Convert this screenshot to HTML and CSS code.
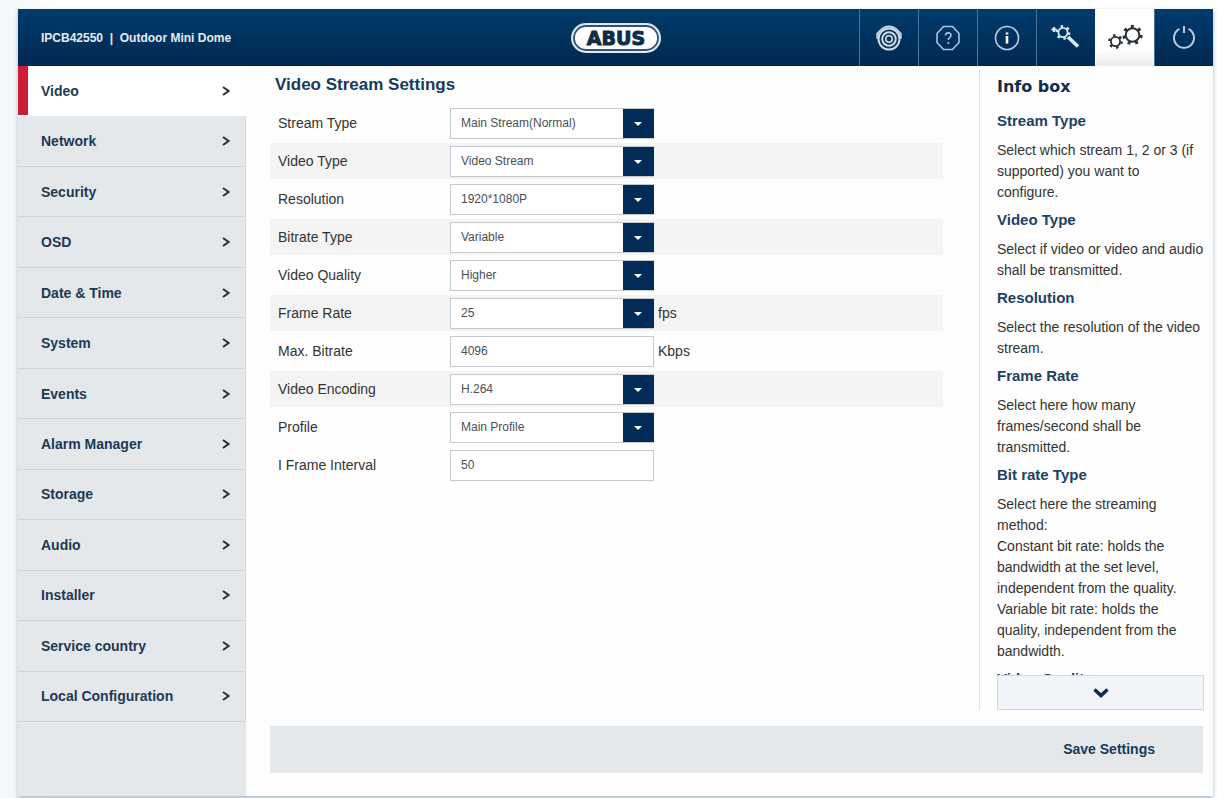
FILE: index.html
```html
<!DOCTYPE html>
<html lang="en">
<head>
  <meta charset="UTF-8" />
  <meta name="viewport" content="width=device-width, initial-scale=1" />
  <title>IPCB42550 | Outdoor Mini Dome</title>
  <link rel="stylesheet" href="styles.css">
</head>
<body>
  <div class="shell">
    <header class="topbar">
      <div class="device">IPCB42550 &nbsp;|&nbsp; Outdoor Mini Dome</div>
      <a class="logo" href="#" aria-label="ABUS">
        <svg width="92" height="32" viewBox="0 0 92 32">
          <rect x="1" y="1" width="90" height="30" rx="15" fill="#dfe9f1"/>
          <rect x="4" y="4" width="84" height="24" rx="12" fill="#fff" stroke="#33526f" stroke-width="1.8"/>
          <text class="logo-text" x="46" y="23" text-anchor="middle">ABUS</text>
        </svg>
      </a>
      <nav class="tools">
        <button class="tool" aria-label="Live view">
          <svg width="28" height="28" viewBox="0 0 28 28" fill="none" stroke="#cfdbe4">
            <path d="M7 4.500Q14 0 21 4.500l5 5v4.500l-3 1H5l-3-1V9.500z" fill="#7f9db6" stroke-width="1.400"/>
            <circle cx="14" cy="15" r="10.500" fill="#0b3259" stroke-width="2"/>
            <circle cx="14" cy="15" r="6.800" stroke-width="2"/>
            <circle cx="14" cy="15" r="3.200" stroke-width="1.600"/>
          </svg>
        </button>
        <button class="tool" aria-label="Help">
          <svg width="28" height="28" viewBox="0 0 28 28" fill="none" stroke="#a9c3d8" stroke-width="1.600">
            <path d="M9.500 2.500h9l6.500 7v9l-6.500 7h-9L3 18.500v-9z" stroke-linejoin="round"/>
            <path d="M11.500 11.500c0-3.500 5.500-3.500 5.500-.3 0 2.300-2.700 2.300-2.700 4.800M14.300 18v2"/>
          </svg>
        </button>
        <button class="tool" aria-label="Information">
          <svg width="28" height="28" viewBox="0 0 28 28" fill="none" stroke="#b9cfdf" stroke-width="1.600">
            <circle cx="14" cy="14" r="11.500"/>
            <path d="M14 12v7.500M14 8.500v2" stroke="#fff" stroke-width="2.600"/>
          </svg>
        </button>
        <button class="tool" aria-label="Wizard">
          <svg width="32" height="28" viewBox="0 0 32 28" fill="none" stroke="#dde8f0">
            <path d="M18 13l10 9.500" stroke-width="3.600"/>
            <circle cx="13" cy="8.500" r="4.600" stroke-width="1.800"/>
            <circle cx="13" cy="8.500" r="6.200" stroke-width="2.400" stroke-dasharray="2.500 3.993"/>
            <path d="M4 3v5M1.500 5.500h5" stroke-width="2.200"/>
          </svg>
        </button>
        <button class="tool tool-active" aria-label="Settings">
          <svg width="38" height="30" viewBox="0 0 38 30" fill="none" stroke="#2a3238">
            <circle cx="26.500" cy="12" r="6.800" stroke-width="2"/>
            <circle cx="26.500" cy="12" r="8.600" stroke-width="3" stroke-dasharray="3 4.719"/>
            <circle cx="9.500" cy="18.500" r="4.600" stroke-width="1.800"/>
            <circle cx="9.500" cy="18.500" r="6.200" stroke-width="2.400" stroke-dasharray="2.500 3.993"/>
          </svg>
        </button>
        <button class="tool" aria-label="Log out">
          <svg width="28" height="28" viewBox="0 0 28 28" fill="none" stroke="#b9cbda" stroke-width="2">
            <path d="M9.500 4.800a10 10 0 1 0 9 0M14 2v7"/>
          </svg>
        </button>
      </nav>
    </header>

    <div class="body">
      <nav class="sidebar">
        <a class="item item-active" href="#">Video <svg class="chevron" viewBox="0 0 8 10"><path d="M1 1l5.500 4L1 9"/></svg></a>
        <a class="item" href="#">Network <svg class="chevron" viewBox="0 0 8 10"><path d="M1 1l5.500 4L1 9"/></svg></a>
        <a class="item" href="#">Security <svg class="chevron" viewBox="0 0 8 10"><path d="M1 1l5.500 4L1 9"/></svg></a>
        <a class="item" href="#">OSD <svg class="chevron" viewBox="0 0 8 10"><path d="M1 1l5.500 4L1 9"/></svg></a>
        <a class="item" href="#">Date &amp; Time <svg class="chevron" viewBox="0 0 8 10"><path d="M1 1l5.500 4L1 9"/></svg></a>
        <a class="item" href="#">System <svg class="chevron" viewBox="0 0 8 10"><path d="M1 1l5.500 4L1 9"/></svg></a>
        <a class="item" href="#">Events <svg class="chevron" viewBox="0 0 8 10"><path d="M1 1l5.500 4L1 9"/></svg></a>
        <a class="item" href="#">Alarm Manager <svg class="chevron" viewBox="0 0 8 10"><path d="M1 1l5.500 4L1 9"/></svg></a>
        <a class="item" href="#">Storage <svg class="chevron" viewBox="0 0 8 10"><path d="M1 1l5.500 4L1 9"/></svg></a>
        <a class="item" href="#">Audio <svg class="chevron" viewBox="0 0 8 10"><path d="M1 1l5.500 4L1 9"/></svg></a>
        <a class="item" href="#">Installer <svg class="chevron" viewBox="0 0 8 10"><path d="M1 1l5.500 4L1 9"/></svg></a>
        <a class="item" href="#">Service country <svg class="chevron" viewBox="0 0 8 10"><path d="M1 1l5.500 4L1 9"/></svg></a>
        <a class="item" href="#">Local Configuration <svg class="chevron" viewBox="0 0 8 10"><path d="M1 1l5.500 4L1 9"/></svg></a>
      </nav>

      <div class="content">
        <div class="panels">
          <main class="settings">
            <h1>Video Stream Settings</h1>
            <form id="streamForm">
              <div class="row">
                <label for="streamType">Stream Type</label>
                <div class="select"><select id="streamType"><option>Main Stream(Normal)</option></select></div>
              </div>
              <div class="row">
                <label for="videoType">Video Type</label>
                <div class="select"><select id="videoType"><option>Video Stream</option></select></div>
              </div>
              <div class="row">
                <label for="resolution">Resolution</label>
                <div class="select"><select id="resolution"><option>1920*1080P</option></select></div>
              </div>
              <div class="row">
                <label for="bitrateType">Bitrate Type</label>
                <div class="select"><select id="bitrateType"><option>Variable</option></select></div>
              </div>
              <div class="row">
                <label for="videoQuality">Video Quality</label>
                <div class="select"><select id="videoQuality"><option>Higher</option></select></div>
              </div>
              <div class="row">
                <label for="frameRate">Frame Rate</label>
                <div class="select"><select id="frameRate"><option>25</option></select></div>
                <span class="unit">fps</span>
              </div>
              <div class="row">
                <label for="maxBitrate">Max. Bitrate</label>
                <input type="text" id="maxBitrate" value="4096">
                <span class="unit">Kbps</span>
              </div>
              <div class="row">
                <label for="videoEncoding">Video Encoding</label>
                <div class="select"><select id="videoEncoding"><option>H.264</option></select></div>
              </div>
              <div class="row">
                <label for="profile">Profile</label>
                <div class="select"><select id="profile"><option>Main Profile</option></select></div>
              </div>
              <div class="row">
                <label for="iFrame">I Frame Interval</label>
                <input type="text" id="iFrame" value="50">
              </div>
            </form>
          </main>

          <aside class="info">
            <h2>Info box</h2>
            <div class="info-text">
              <h3>Stream Type</h3>
              <p>Select which stream 1, 2 or 3 (if supported) you want to configure.</p>
              <h3>Video Type</h3>
              <p>Select if video or video and audio shall be transmitted.</p>
              <h3>Resolution</h3>
              <p>Select the resolution of the video stream.</p>
              <h3>Frame Rate</h3>
              <p>Select here how many frames/second shall be transmitted.</p>
              <h3>Bit rate Type</h3>
              <p>Select here the streaming method:<br>Constant bit rate: holds the bandwidth at the set level, independent from the quality.<br>Variable bit rate: holds the quality, independent from the bandwidth.</p>
              <h3>Video Quality</h3>
            </div>
            <button class="more" aria-label="Scroll down">
              <svg width="16" height="12" viewBox="0 0 16 12" fill="none" stroke="#0f2a48" stroke-width="3.500"><path d="M1.500 2.500L8 8.500l6.500-6"/></svg>
            </button>
          </aside>
        </div>
        <div class="actions">
          <button class="save" type="submit" form="streamForm">Save Settings</button>
        </div>
      </div>
    </div>
  </div>
</body>
</html>
```
FILE: styles.css
```css
* {
  box-sizing: border-box;
}

body {
  margin: 0;
  min-height: 100vh;
  display: flex;
  padding: 9px 4px 2px 18px;
  background: linear-gradient(to right, #f3f8fa, #fdfefe 60px);
  color: #333;
  font-family: "Liberation Sans", Arial, sans-serif;
  font-size: 14px;
}

button,
input,
select {
  font-family: inherit;
}

button {
  border: 0;
  cursor: pointer;
}

.shell {
  flex: 1;
  display: flex;
  flex-direction: column;
  background: #fefefe;
  box-shadow: 0 2px 4px #aab4bd;
}

/* top bar */
.topbar {
  display: grid;
  grid-template-columns: 1fr auto 1fr;
  height: 57px;
  background: linear-gradient(#003c6e, #00284f);
}

.device {
  align-self: center;
  padding-left: 23px;
  color: #e4edf4;
  font-size: 12px;
  font-weight: bold;
}

.logo {
  align-self: center;
  height: 32px;
}

.logo-text {
  font-family: "DejaVu Sans", Verdana, sans-serif;
  font-size: 19px;
  font-weight: bold;
  fill: #0d2c4a;
  stroke: #0d2c4a;
  stroke-width: 1px;
}

.tools {
  display: flex;
  justify-content: flex-end;
}

.tool {
  width: 59px;
  padding: 0;
  display: flex;
  align-items: center;
  justify-content: center;
  background: none;
  border-left: 1px solid #4c7396;
}

.tool-active {
  background: linear-gradient(#fff 70%, #ececee);
  border-left-color: #fff;
}

.body {
  flex: 1;
  display: flex;
}

/* sidebar */
.sidebar {
  width: 228px;
  flex-shrink: 0;
  display: flex;
  flex-direction: column;
  padding-bottom: 74px;
  background: #e4e8eb;
}

.item {
  flex: 1;
  display: flex;
  align-items: center;
  justify-content: space-between;
  padding: 0 15px 0 23px;
  border-right: 1px solid #d2d8dc;
  border-bottom: 1px solid #d0d5da;
  color: #1c3a57;
  font-weight: bold;
  text-decoration: none;
}

.item-active {
  background: #fff;
  border-color: #fff;
  box-shadow: inset 10px 0 #cb1d38;
}

.chevron {
  width: 8px;
  height: 10px;
  fill: none;
  stroke: #26323e;
  stroke-width: 2;
}

/* content */
.content {
  flex: 1;
  display: flex;
  flex-direction: column;
  padding: 4px 10px 23px 24px;
}

.panels {
  flex: 1;
  display: flex;
  margin-bottom: 16px;
}

.settings {
  flex: 1;
  padding-right: 36px;
}

h1 {
  margin: 0;
  padding: 5px 0 10px 5px;
  color: #153a5c;
  font-size: 17px;
  line-height: 20px;
}

.row {
  display: flex;
  align-items: center;
  height: 36px;
  margin-bottom: 2px;
  padding-left: 8px;
}

.row:nth-child(even):not(:last-child) {
  background: #f4f4f4;
}

.row label {
  width: 172px;
}

.select {
  position: relative;
}

.select::after {
  content: "";
  position: absolute;
  top: 14px;
  right: 12px;
  border: 4px solid transparent;
  border-top-color: #fff;
  border-bottom: 0;
  pointer-events: none;
}

.row select,
.row input {
  width: 204px;
  height: 31px;
  padding: 0 10px;
  border: 1px solid #c5cacf;
  border-radius: 0;
  background: #fff;
  color: #4a4f55;
  font-size: 12px;
}

.row select {
  display: block;
  appearance: none;
  background: linear-gradient(#022b57, #022b57) right / 31px 100% no-repeat border-box #fff;
  border-right: 0;
}

.unit {
  margin-left: 4px;
}

/* info box */
.info {
  width: 225px;
  display: flex;
  flex-direction: column;
  margin-right: -1px;
  padding-left: 17px;
  border-left: 1px solid #e0e4e9;
}

.info h2 {
  margin: 0;
  padding-top: 7px;
  color: #0f2d50;
  font-family: "DejaVu Sans", Verdana, sans-serif;
  font-size: 16px;
  line-height: 20px;
}

.info-text {
  flex: 1 1 0;
  height: 0;
  min-height: 0;
  overflow: hidden;
  padding-top: 14px;
}

.info-text h3 {
  margin: 0 0 9px;
  color: #1b4263;
  font-size: 15px;
  line-height: 20px;
}

.info-text p {
  margin: 0 0 7px;
  line-height: 21px;
}

.more {
  height: 35px;
  display: flex;
  align-items: center;
  justify-content: center;
  background: #f1f4f8;
  border: 1px solid #d3d8de;
}

/* actions */
.actions {
  display: flex;
  justify-content: flex-end;
  background: #e5e8ea;
}

.save {
  padding: 0 48px;
  background: none;
  color: #173a5d;
  font-size: 14px;
  font-weight: bold;
  line-height: 47px;
}
```
